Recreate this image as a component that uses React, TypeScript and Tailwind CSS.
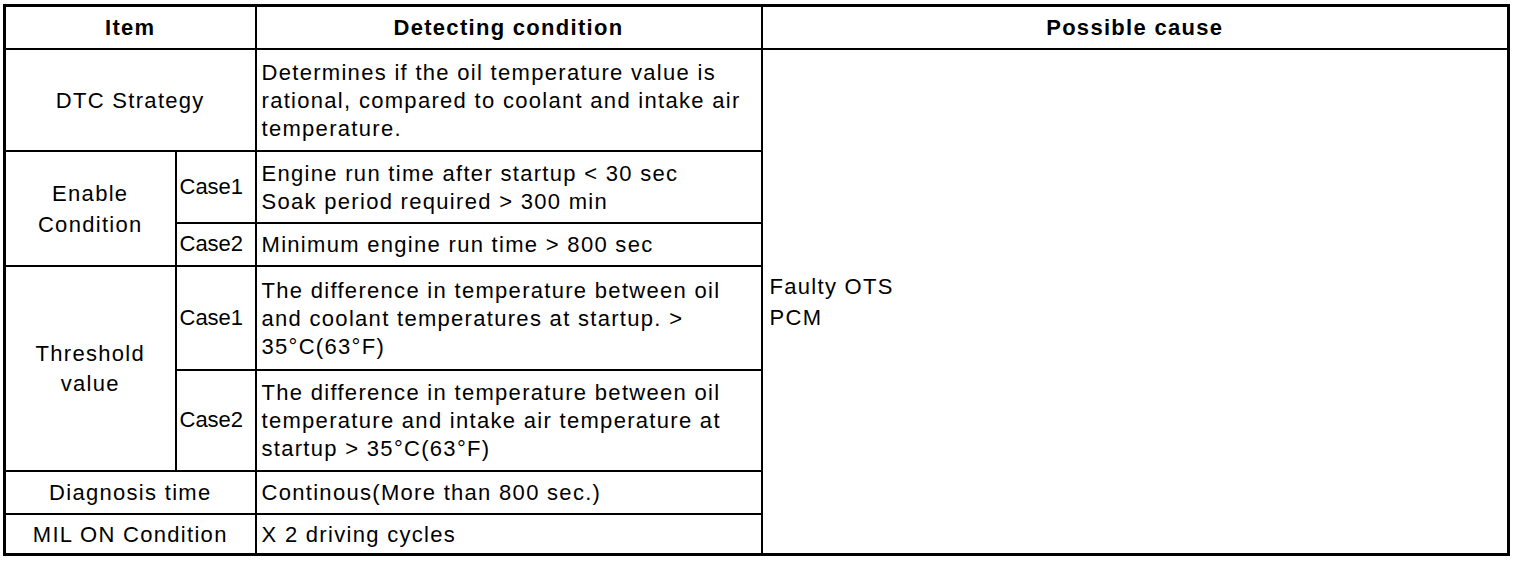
import React from 'react';

const cell = 'border-2 border-black align-middle';

export default function App() {
  return (
    <div className="w-[1520px] h-[562px] bg-white pt-[4px] pl-[3px]" style={{ fontFamily: '"Liberation Sans", Arial, sans-serif' }}>
      <table className="border-collapse table-fixed border-[3px] border-black text-black text-[22px] leading-[28px] tracking-[1.3px]">
        <colgroup>
          <col className="w-[171px]" />
          <col className="w-[80px]" />
          <col className="w-[506px]" />
          <col className="w-[747px]" />
        </colgroup>
        <thead>
          <tr className="h-[43px]">
            <th colSpan={2} className={`${cell} font-bold text-center pt-[2px]`}>Item</th>
            <th className={`${cell} font-bold text-center pt-[2px]`}>Detecting condition</th>
            <th className={`${cell} font-bold text-center pt-[2px]`}>Possible cause</th>
          </tr>
        </thead>
        <tbody>
          <tr className="h-[102px]">
            <td colSpan={2} className={`${cell} text-center pt-[2px]`}>DTC Strategy</td>
            <td className={`${cell} px-[5px] pt-[2px]`}>
              Determines if the oil temperature value is rational, compared to coolant and intake air temperature.
            </td>
            <td rowSpan={7} className={`${cell} px-[7px] leading-[31px] pt-[2px]`}>
              Faulty OTS
              <br />
              PCM
            </td>
          </tr>
          <tr className="h-[72px]">
            <td rowSpan={2} className={`${cell} text-center leading-[31px] pt-[2px]`}>
              Enable
              <br />
              Condition
            </td>
            <td className={`${cell} px-[3px] tracking-normal`}>Case1</td>
            <td className={`${cell} px-[5px] pt-[2px]`}>
              Engine run time after startup &lt; 30 sec
              <br />
              Soak period required &gt; 300 min
            </td>
          </tr>
          <tr className="h-[43px]">
            <td className={`${cell} px-[3px] tracking-normal`}>Case2</td>
            <td className={`${cell} px-[5px] pt-[2px]`}>Minimum engine run time &gt; 800 sec</td>
          </tr>
          <tr className="h-[104px]">
            <td rowSpan={2} className={`${cell} text-center leading-[30px] pt-[2px]`}>
              Threshold
              <br />
              value
            </td>
            <td className={`${cell} px-[3px] tracking-normal`}>Case1</td>
            <td className={`${cell} px-[5px] pt-[2px]`}>
              The difference in temperature between oil and coolant temperatures at startup. &gt; 35°C(63°F)
            </td>
          </tr>
          <tr className="h-[101px]">
            <td className={`${cell} px-[3px] tracking-normal`}>Case2</td>
            <td className={`${cell} px-[5px] pt-[2px]`}>
              The difference in temperature between oil temperature and intake air temperature at startup &gt; 35°C(63°F)
            </td>
          </tr>
          <tr className="h-[43px]">
            <td colSpan={2} className={`${cell} text-center pt-[2px]`}>Diagnosis time</td>
            <td className={`${cell} px-[5px] pt-[2px]`}>Continous(More than 800 sec.)</td>
          </tr>
          <tr className="h-[41px]">
            <td colSpan={2} className={`${cell} text-center pt-[2px]`}>MIL ON Condition</td>
            <td className={`${cell} px-[5px] pt-[2px]`}>X 2 driving cycles</td>
          </tr>
        </tbody>
      </table>
    </div>
  );
}
